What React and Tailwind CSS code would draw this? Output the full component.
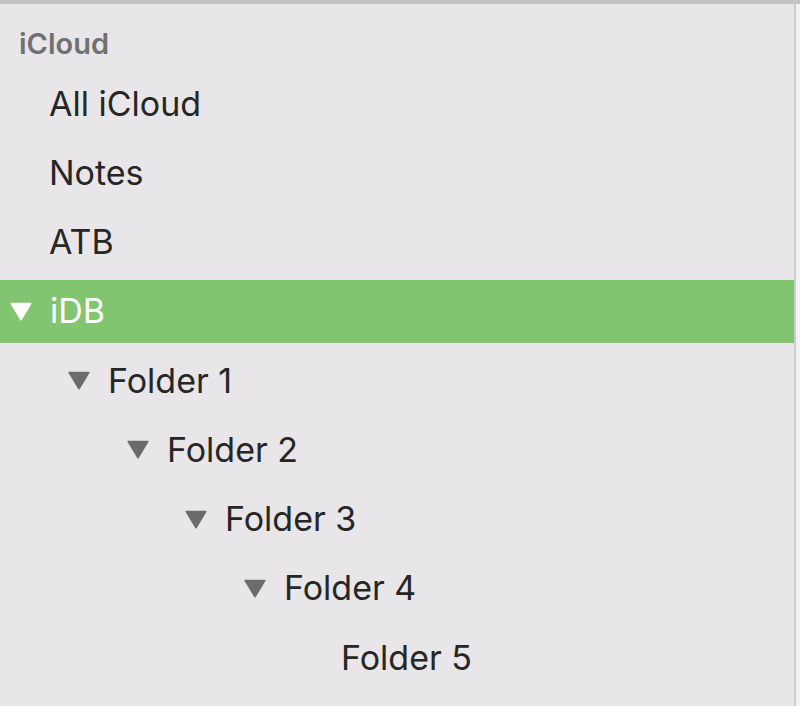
import React from "react";

function Tri({ white }) {
  return (
    <svg width="22" height="19" viewBox="0 0 22 19" className="shrink-0 mr-[18px]">
      <path
        d="M1.2 1.5 H20.8 L11 17.8 Z"
        fill={white ? "#ffffff" : "#6b6b6b"}
        stroke={white ? "#ffffff" : "#6b6b6b"}
        strokeWidth="1.5"
        strokeLinejoin="round"
      />
    </svg>
  );
}

const rows = [
  { label: "All iCloud", pad: "pl-[10px]", tri: false },
  { label: "Notes", pad: "pl-[10px]", tri: false },
  { label: "ATB", pad: "pl-[10px]", tri: false },
  { label: "iDB", pad: "pl-[10px]", tri: true, sel: true },
  { label: "Folder 1", pad: "pl-[68px]", tri: true },
  { label: "Folder 2", pad: "pl-[127px]", tri: true },
  { label: "Folder 3", pad: "pl-[185px]", tri: true },
  { label: "Folder 4", pad: "pl-[244px]", tri: true },
  { label: "Folder 5", pad: "pl-[302px]", tri: false },
];

export default function App() {
  return (
    <div
      className="w-[800px] h-[706px] overflow-hidden flex flex-col bg-[#e8e6e8]"
      style={{ fontFamily: "Inter, 'Noto Sans', sans-serif" }}
    >
      <div className="h-[4px] shrink-0 bg-[#c3c3c3]" />
      <div className="flex flex-1 min-h-0">
        <div className="w-[794px] shrink-0 flex flex-col">
          <div className="h-[65px] shrink-0 flex items-center pl-[19px] pt-[13px]">
            <span className="text-[29px] font-semibold text-[#717171] leading-none">iCloud</span>
          </div>
          {rows.map((r) => (
            <div key={r.label} className="h-[69.25px] shrink-0 pt-[3px] pb-[3px]">
              <div
                className={`h-[63px] flex items-center ${r.pad} ${
                  r.sel ? "bg-[#81c570] text-white" : "text-[#262626]"
                }`}
              >
                {r.tri ? <Tri white={r.sel} /> : <div className="w-[39px] shrink-0" />}
                <span className="text-[34px] leading-none">{r.label}</span>
              </div>
            </div>
          ))}
        </div>
        <div className="w-[2px] shrink-0 bg-[#cbcbcb]" />
        <div className="flex-1 bg-[#f3f3f3]" />
      </div>
    </div>
  );
}
